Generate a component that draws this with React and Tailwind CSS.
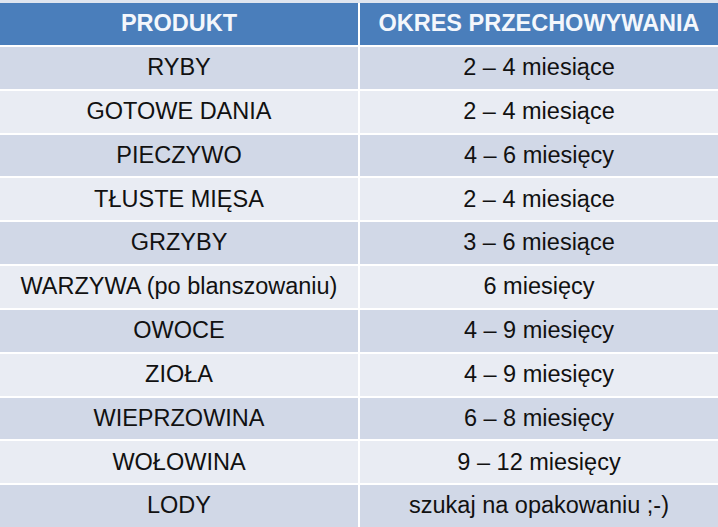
const rows = [
  ["RYBY", "2 – 4 miesiące"],
  ["GOTOWE DANIA", "2 – 4 miesiące"],
  ["PIECZYWO", "4 – 6 miesięcy"],
  ["TŁUSTE MIĘSA", "2 – 4 miesiące"],
  ["GRZYBY", "3 – 6 miesiące"],
  ["WARZYWA (po blanszowaniu)", "6 miesięcy"],
  ["OWOCE", "4 – 9 miesięcy"],
  ["ZIOŁA", "4 – 9 miesięcy"],
  ["WIEPRZOWINA", "6 – 8 miesięcy"],
  ["WOŁOWINA", "9 – 12 miesięcy"],
  ["LODY", "szukaj na opakowaniu ;-)"],
];

const Cell = ({ children, head, odd }) => (
  <div
    className={
      "flex items-center justify-center whitespace-nowrap " +
      (head
        ? "bg-[#4a7ebb] text-[#f4f7fc] font-bold"
        : odd
        ? "bg-[#d1d8e7] text-[#111]"
        : "bg-[#e9ecf3] text-[#111]")
    }
  >
    {children}
  </div>
);

export default function App() {
  return (
    <div
      className="h-[527px] w-[718px] overflow-hidden bg-white border-t-[3px] border-[#dfe5ef] text-[23.5px] leading-none"
      style={{ fontFamily: '"Liberation Sans", Arial, sans-serif' }}
    >
      <div className="grid h-full grid-cols-[358px_1fr] grid-rows-[42px_repeat(11,1fr)] gap-x-[2px] gap-y-[2px]">
        <Cell head>PRODUKT</Cell>
        <Cell head>OKRES PRZECHOWYWANIA</Cell>
        {rows.map(([a, b], i) => (
          <div key={a} className="contents">
            <Cell odd={i % 2 === 0}>{a}</Cell>
            <Cell odd={i % 2 === 0}>{b}</Cell>
          </div>
        ))}
      </div>
    </div>
  );
}
